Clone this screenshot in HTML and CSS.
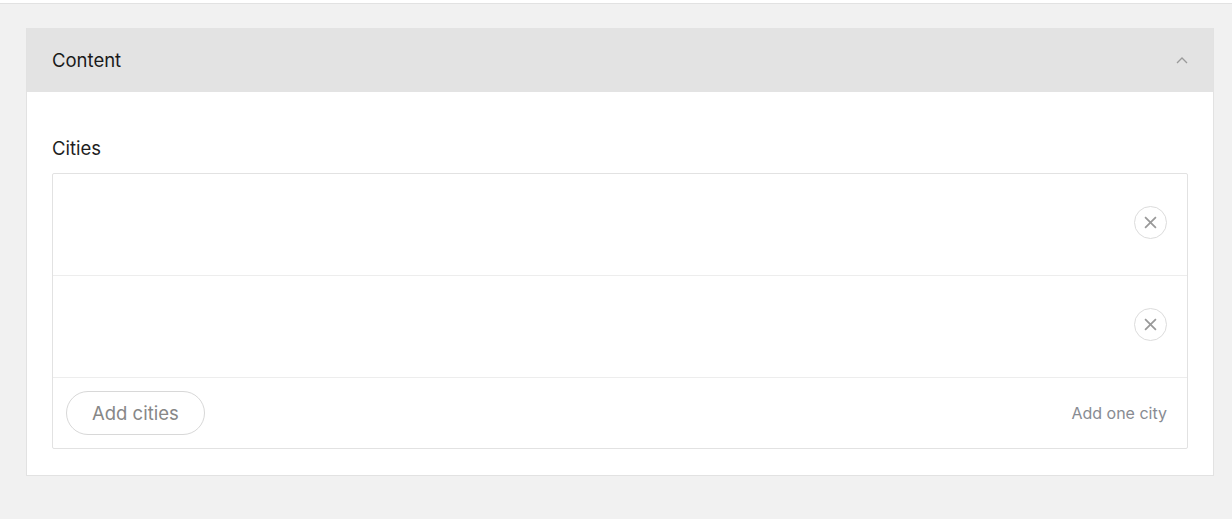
FILE: index.html
```html
<!DOCTYPE html>
<html lang="en">
<head>
    <meta charset="UTF-8">
    <meta name="viewport" content="width=device-width, initial-scale=1.0">
    <title>Content</title>
    <link rel="stylesheet" href="styles.css">
</head>
<body>
    <div class="topbar"></div>

    <div class="page">
        <!-- Collapsible panel -->
        <section class="panel">
            <div class="panel-header">
                <span class="panel-title">Content</span>
                <svg class="chevron" width="12" height="8" viewBox="0 0 12 8">
                    <path d="M1 7 L6 2 L11 7" fill="none" stroke="#9a9a9a" stroke-width="1.3"/>
                </svg>
            </div>

            <div class="panel-body">
                <label class="field-label">Cities</label>

                <!-- Repeater list -->
                <div class="repeater">
                    <div class="repeater-row">
                        <button class="remove-btn" title="Remove">
                            <svg width="13" height="13" viewBox="0 0 12 12">
                                <path d="M1 1 L11 11 M11 1 L1 11" stroke="#999" stroke-width="1.6"/>
                            </svg>
                        </button>
                    </div>
                    <div class="repeater-row">
                        <button class="remove-btn" title="Remove">
                            <svg width="13" height="13" viewBox="0 0 12 12">
                                <path d="M1 1 L11 11 M11 1 L1 11" stroke="#999" stroke-width="1.6"/>
                            </svg>
                        </button>
                    </div>
                    <div class="repeater-footer">
                        <button class="add-btn">Add cities</button>
                        <span class="hint">Add one city</span>
                    </div>
                </div>
            </div>
        </section>
    </div>
</body>
</html>
```

FILE: styles.css
```css
/* Base */
body {
    margin: 0;
    font-family: Inter, "Noto Sans", Arial, sans-serif;
    background-color: #f1f1f1;
    color: #1e1e1e;
}

.topbar {
    height: 3px;
    background-color: #fff;
    border-bottom: 1px solid #e2e2e2;
}

.page {
    padding: 24px 18px 0 26px;
}

/* Panel */
.panel {
    background-color: #fff;
    border: 1px solid #e2e2e2;
    border-top: none;
}
.panel-header {
    height: 64px;
    display: flex;
    align-items: center;
    justify-content: space-between;
    padding: 0 25px 0 25px;
    background-color: #e3e3e3;
}
.panel-title {
    font-size: 18.5px;
    font-weight: 400;
    color: #1a1a1a;
}
.chevron {
    display: block;
}
.panel-body {
    padding: 44px 25px 26px 25px;
}

.field-label {
    display: block;
    font-size: 18.5px;
    line-height: 24px;
    margin-bottom: 13px;
    color: #1e1e1e;
}

/* Repeater */
.repeater {
    border: 1px solid #e2e2e2;
    border-radius: 2px;
}
.repeater-row {
    height: 102px;
    display: flex;
    align-items: center;
    justify-content: flex-end;
    padding: 0 20px 4px;
    box-sizing: border-box;
    border-bottom: 1px solid #ededed;
}
.remove-btn {
    width: 33px;
    height: 33px;
    border: 1px solid #dcdcdc;
    border-radius: 50%;
    background: #fff;
    display: flex;
    align-items: center;
    justify-content: center;
    padding: 0;
    cursor: pointer;
}
.repeater-footer {
    height: 70px;
    display: flex;
    align-items: center;
    justify-content: space-between;
    padding: 0 20px 0 13px;
    box-sizing: border-box;
}
.add-btn {
    height: 44px;
    padding: 0 25px;
    border: 1px solid #d8d8d8;
    border-radius: 22px;
    background: #fff;
    font-family: inherit;
    font-size: 18.5px;
    color: #878787;
    cursor: pointer;
}
.hint {
    font-size: 16px;
    color: #888b92;
}
```
